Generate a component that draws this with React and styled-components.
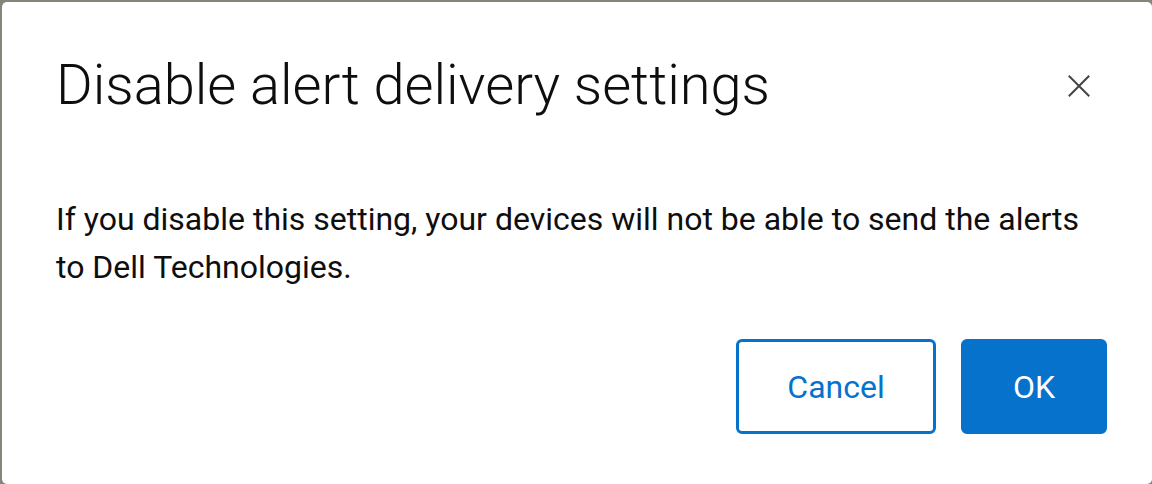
import React from "react";
import styled, { createGlobalStyle } from "styled-components";

const Global = createGlobalStyle`
  html, body {
    margin: 0;
    padding: 0;
    background: #85857c;
    overflow: hidden;
  }
  body {
    font-family: Roboto, "Liberation Sans", sans-serif;
  }
`;

const Backdrop = styled.div`
  width: 1152px;
  height: 484px;
  padding: 2px 0 0 2px;
  box-sizing: border-box;
`;

const Dialog = styled.div`
  width: 1150px;
  height: 482px;
  box-sizing: border-box;
  background: #ffffff;
  border-radius: 5px;
  padding: 49px 45px 0 54px;
  display: flex;
  flex-direction: column;
`;

const Header = styled.div`
  display: flex;
  align-items: center;
  justify-content: space-between;
`;

const Title = styled.h1`
  margin: 0;
  font-family: Roboto, "Liberation Sans", sans-serif;
  font-weight: 300;
  font-size: 56px;
  line-height: 68px;
  color: #0e0e0e;
`;

const CloseButton = styled.button`
  width: 40px;
  height: 40px;
  margin: 2px 8px 0 0;
  padding: 0;
  border: none;
  background: transparent;
  display: flex;
  align-items: center;
  justify-content: center;
  cursor: pointer;
`;

const Body = styled.p`
  margin: 76px 0 0;
  font-size: 32px;
  line-height: 48px;
  color: #0e0e0e;
  max-width: 1035px;
`;

const Footer = styled.div`
  display: flex;
  justify-content: flex-end;
  gap: 25px;
  margin-top: 48px;
`;

const Button = styled.button`
  height: 95px;
  min-width: ${(p) => (p.$primary ? "146px" : "200px")};
  box-sizing: border-box;
  border-radius: 6px;
  border: 3px solid #0672cb;
  background: ${(p) => (p.$primary ? "#0672cb" : "#ffffff")};
  color: ${(p) => (p.$primary ? "#ffffff" : "#0672cb")};
  font-family: Roboto, "Liberation Sans", sans-serif;
  font-size: 32px;
  font-weight: 400;
  padding: 0 40px;
  cursor: pointer;
`;

export default function App() {
  return (
    <>
      <Global />
      <Backdrop>
        <Dialog>
          <Header>
            <Title>Disable alert delivery settings</Title>
            <CloseButton aria-label="Close">
              <svg width="22" height="22" viewBox="0 0 22 22">
                <path d="M1.5 1.5 L20.5 20.5 M20.5 1.5 L1.5 20.5" stroke="#444" strokeWidth="2" strokeLinecap="square" />
              </svg>
            </CloseButton>
          </Header>
          <Body>
            If you disable this setting, your devices will not be able to send the alerts to Dell Technologies.
          </Body>
          <Footer>
            <Button>Cancel</Button>
            <Button $primary>OK</Button>
          </Footer>
        </Dialog>
      </Backdrop>
    </>
  );
}
